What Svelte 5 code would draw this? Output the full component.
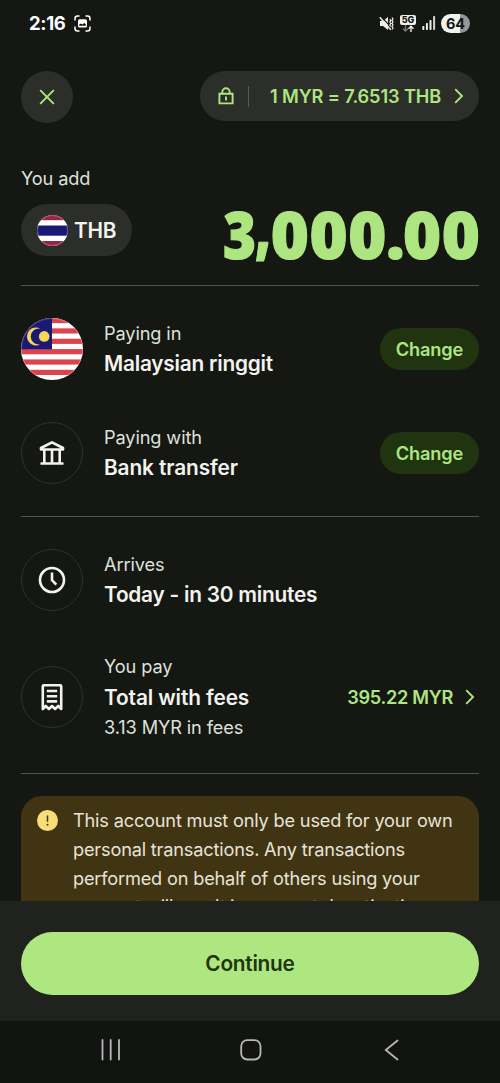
<script>
  const stripes = Array.from({ length: 6 }, (_, i) => i);
  const bars = [4, 7, 10, 14];
</script>

{#snippet chevron()}
  <svg class="chevron" width="10" height="16" viewBox="0 0 10 16"><path d="M1.2 1.2 8 8l-6.8 6.8" /></svg>
{/snippet}

<div class="screen">
  <div class="status">
    <div class="left">
      <span class="time">2:16</span>
      <svg width="17" height="17" viewBox="0 0 17 17">
        <path d="M1 5V3.5Q1 1 3.5 1H5M12 1h1.5Q16 1 16 3.5V5M16 12v1.5q0 2.5-2.5 2.5H12M5 16H3.5Q1 16 1 13.5V12" fill="none" stroke="#fff" stroke-width="1.5" stroke-linecap="round" />
        <rect x="4" y="4.3" width="9" height="8.2" rx="1.6" fill="#fff" />
        <path d="M5.2 10.8V9.600l1.800-1 1.500 1 1.800-1.700 1.500 1.400v1.500z" fill="#151712" />
      </svg>
    </div>
    <div class="right">
      <svg width="15" height="15" viewBox="0 0 15 15">
        <path d="M1 5h3l5-4v13L4 10H1z" fill="#eee" />
        <path d="M2 .3l12 13" stroke="#151712" stroke-width="1.200" />
        <path d="M.8 1.300l11 12.500" stroke="#eee" stroke-width="1.500" />
        <path d="M10.800 3l1 1.500-1 1.500 1 1.500-1 1.500 1 1.500M13 1.500l1 1.500-1 1.500 1 1.500-1 1.500 1 1.500-1 1.500 1 1.500-1 1.500" fill="none" stroke="#eee" stroke-width="1.200" />
      </svg>
      <div class="net">
        <span>5G</span>
        <svg width="12" height="7" viewBox="0 0 12 7" fill="none">
          <path d="M3.500 0v6M1 3.500 3.500 6 6 3.500" stroke="#777" stroke-width="1.300" />
          <path d="M9 7V1.500M6.500 3.800 9 1.300l2.500 2.500" stroke="#eee" stroke-width="1.400" />
        </svg>
      </div>
      <svg class="signal" width="14" height="14" viewBox="0 0 14 14">
        {#each bars as h, i}
          <rect x={i * 3.6 + 0.3} y={14 - h} width="2" height={h} rx="0.7" fill={i === 3 ? '#d4d4d4' : '#eee'} />
        {/each}
      </svg>
      <span class="battery">64</span>
    </div>
  </div>

  <header>
    <button class="close" aria-label="Close">
      <svg width="16" height="16" viewBox="0 0 16 16"><path d="M1.200 1.200l13.600 13.600M14.800 1.200 1.200 14.800" /></svg>
    </button>
    <button class="rate">
      <svg width="16" height="18" viewBox="0 0 16 18">
        <path d="M1.400 6.800h13.200v9.600H1.400zM4.300 6.500V5a3.700 3.700 0 0 1 7.400 0v1.500M8 9.600v3.800" />
      </svg>
      <i></i>
      <span>1 MYR = 7.6513 THB</span>
      {@render chevron()}
    </button>
  </header>

  <main>
    <div class="label add">You add</div>
    <div class="amount-row">
      <button class="currency">
        <svg width="31" height="31" viewBox="0 0 31 31">
          <clipPath id="th"><circle cx="15.500" cy="15.500" r="15.500" /></clipPath>
          <g clip-path="url(#th)">
            <rect width="31" height="31" fill="#fff" />
            <rect width="31" height="5.200" fill="#982447" />
            <rect y="10.500" width="31" height="10.200" fill="#1b1976" />
            <rect y="26" width="31" height="5" fill="#982447" />
          </g>
          <circle cx="15.500" cy="15.500" r="15" fill="none" stroke="#fff" stroke-opacity=".2" />
        </svg>
        <span>THB</span>
      </button>
      <div class="amount"><span class="lead">3</span><span class="comma">,</span>000<span class="point">.</span>00</div>
    </div>
    <hr />

    <section class="row first">
      <svg class="flag" viewBox="0 0 62 62">
        <clipPath id="my"><circle cx="31" cy="31" r="31" /></clipPath>
        <g clip-path="url(#my)">
          <rect width="62" height="62" fill="#fff" />
          {#each stripes as i}
            <rect y={i * 10.36} width="62" height="5.180" fill="#dd434b" />
          {/each}
          <rect width="31" height="31.300" fill="#1b1976" />
          <path d="M19.500 10.600A9 9 0 1 0 19.500 26.200 8 8 0 1 1 19.500 10.600Z" fill="#f6d751" />
          <circle cx="23.200" cy="18.400" r="5.300" fill="#f6d751" />
        </g>
        <circle cx="31" cy="31" r="30.500" fill="none" stroke="#fff" stroke-opacity=".2" />
      </svg>
      <div class="copy"><div class="label">Paying in</div><div class="title">Malaysian ringgit</div></div>
      <button class="change">Change</button>
    </section>

    <section class="row second">
      <div class="ring">
        <svg width="26" height="26" viewBox="0 0 26 26">
          <path d="M2 9.500V8L13 2.300 24 8v1.500zM5.300 10v13M13 10v13M20.700 10v13M1.500 23.500h23" />
        </svg>
      </div>
      <div class="copy"><div class="label">Paying with</div><div class="title">Bank transfer</div></div>
      <button class="change">Change</button>
    </section>
    <hr />

    <section class="row third">
      <div class="ring">
        <svg width="28" height="28" viewBox="0 0 28 28"><circle cx="14" cy="14" r="12" /><path d="M14 6.500v7.700l4.300 4.500" /></svg>
      </div>
      <div class="copy"><div class="label">Arrives</div><div class="title">Today - in 30 minutes</div></div>
    </section>

    <section class="row fourth">
      <div class="ring">
        <svg width="24" height="28" viewBox="0 0 24 28">
          <path d="M2.800 26V3.200q0-1 1-1h16.400q1 0 1 1V26l-3-3-3.100 3-3.100-3-3.100 3-3.100-3zM6.800 8h10.400M6.800 13.200h10.400M6.800 18.400h10.400" />
        </svg>
      </div>
      <div class="copy">
        <div class="label">You pay</div><div class="title">Total with fees</div><div class="label">3.13 MYR in fees</div>
      </div>
      <button class="total"><span>395.22 MYR</span>{@render chevron()}</button>
    </section>
    <hr />

    <div class="alert">
      <svg width="21" height="21" viewBox="0 0 21 21">
        <circle cx="10.500" cy="10.500" r="10.500" fill="#f7de78" />
        <path d="M10.500 5.500v6.300" stroke="#423512" stroke-width="1.500" />
        <circle cx="10.500" cy="14.800" r="1" fill="#423512" />
      </svg>
      <p>This account must only be used for your own<br />personal transactions. Any transactions<br />performed on behalf of others using your<br />account will result in account deactivation</p>
    </div>
  </main>

  <footer><button>Continue</button></footer>

  <nav>
    <svg width="20" height="22" viewBox="0 0 20 22"><path d="M1.500 1v19.500M9.700 1v19.500M18 1v19.500" /></svg>
    <svg class="home" width="22" height="22" viewBox="0 0 22 22"><rect x="1.200" y="1.200" width="19.300" height="19.300" rx="6" /></svg>
    <svg width="15" height="22" viewBox="0 0 15 22"><path d="M13.500 1.500 1.800 11l11.700 9.500" /></svg>
  </nav>
</div>

<style>
  :global(body) { margin: 0; background: #151712; }
  .screen {
    width: 500px; height: 1083px; overflow: hidden; display: flex; flex-direction: column;
    background: #151712; color: #f2f3ee; font-family: Inter, sans-serif; box-sizing: border-box;
  }
  .screen * { box-sizing: border-box; }
  svg { display: block; flex: none; }
  button { font: inherit; color: inherit; border: 0; padding: 0; background: none; display: flex; align-items: center; }
  .status { height: 46px; flex: none; padding: 0 30px 0 29px; display: flex; justify-content: space-between; align-items: center; }
  .left { display: flex; align-items: center; gap: 8.500px; }
  .time { font-size: 18.500px; font-weight: 700; color: #fff; letter-spacing: -.35px; }
  .right { display: flex; align-items: center; }
  .net { width: 16px; margin-left: 6px; padding-top: 1px; display: flex; flex-direction: column; align-items: center; }
  .net span { background: #eee; color: #151712; border-radius: 2px; width: 16px; height: 10px; font-size: 9px; line-height: 10px; font-weight: 800; text-align: center; }
  .signal { margin-left: 6px; }
  .battery {
    margin-left: 5px; width: 29px; height: 19px; border-radius: 10px; color: #151712;
    background: linear-gradient(90deg, #f1f1f1 64%, #969696 64%);
    font-size: 14.500px; line-height: 19px; font-weight: 700; text-align: center;
  }
  header { height: 102px; flex: none; padding: 25px 21px 0; display: flex; justify-content: space-between; align-items: flex-start; }
  .close { width: 52px; height: 52px; border-radius: 50%; background: #2c2e29; justify-content: center; }
  .close path, .rate path, .chevron path { fill: none; stroke: #ade681; stroke-width: 1.900; }
  .rate { width: 279px; height: 50px; border-radius: 25px; background: #2c2e29; padding: 0 15px 0 18px; color: #ade681; font-size: 18.200px; font-weight: 600; letter-spacing: -.12px; }
  .rate i { width: 1px; height: 21px; background: #595b55; margin: 0 21px 0 14px; }
  .rate span { flex: 1; white-space: nowrap; text-align: left; }
  main { flex: 1; min-height: 0; overflow: hidden; padding: 0 21px; }
  .label { font-size: 18.200px; line-height: 30px; color: #dfe0db; white-space: nowrap; letter-spacing: -.12px; }
  .add { padding-top: 15px; }
  .amount-row { height: 92px; display: flex; justify-content: space-between; align-items: flex-start; padding-top: 11px; }
  .currency { width: 111px; height: 52px; border-radius: 26px; background: #2c2e29; padding-left: 16px; gap: 6px; font-size: 20.800px; font-weight: 600; letter-spacing: -.3px; }
  .amount { font: 900 65px/61px 'Noto Sans', sans-serif; letter-spacing: .7px; margin-right: -1.500px; color: #ade681; -webkit-text-stroke: 1.200px #ade681; display: flex; }
  .lead { transform: scaleX(.87); transform-origin: right; margin-right: -2px; }
  .comma { width: 16px; transform: translateY(-7px) scaleX(.8); transform-origin: left; }
  .point { margin: 0 -2.500px 0 -1.200px; }
  hr { margin: 0; border: 0; height: 1px; background: #52544f; }
  .row { display: flex; align-items: center; gap: 21px; height: 62px; }
  .first { margin-top: 32px; }
  .second { margin: 42px 0 32px; }
  .row .label:first-child { line-height: 29px; padding-bottom: 1px; }
  .third { margin-top: 32px; }
  .fourth { height: 90px; margin: 41px 0 31px; }
  .fourth .title { line-height: 31px; }
  .fourth .title + .label { margin-top: -1px; }
  .flag, .ring { width: 62px; height: 62px; flex: none; }
  .ring { border: 1px solid #30322d; border-radius: 50%; display: flex; align-items: center; justify-content: center; }
  .ring path, .ring circle { fill: none; stroke: #f2f3ee; stroke-width: 2.600; stroke-linejoin: round; }
  .copy { flex: 1; }
  .title { font-size: 20.800px; line-height: 30px; font-weight: 600; white-space: nowrap; letter-spacing: -.22px; }
  .second .title, .fourth .title { letter-spacing: -.1px; }
  .change { width: 99px; height: 42px; border-radius: 21px; background: #203410; color: #ade681; font-size: 18.200px; font-weight: 600; letter-spacing: -.15px; justify-content: center; }
  .total { color: #ade681; font-size: 18.200px; font-weight: 600; letter-spacing: -.3px; gap: 12px; padding-right: 4px; }
  .alert { margin-top: 22px; height: 240px; border-radius: 21px; background: #413412; padding: 10px 15px 10px 15.500px; display: flex; gap: 15.500px; }
  .alert svg { margin-top: 4px; }
  .alert p { margin: 0; font-size: 18.200px; line-height: 28.800px; color: #e6e3d9; white-space: nowrap; letter-spacing: -.19px; }
  footer { flex: none; height: 120px; background: #20221e; padding: 31px 21px 0; }
  footer button { width: 100%; height: 63px; border-radius: 32px; background: #aee780; color: #203410; font-size: 20.800px; font-weight: 600; letter-spacing: -.25px; justify-content: center; }
  nav { flex: none; height: 62px; padding: 0 101px 4px; display: flex; justify-content: space-between; align-items: center; background: #121411; }
  .home { margin-right: 3px; }
  nav path, nav rect { fill: none; stroke: #b8b8b8; stroke-width: 1.800; stroke-linecap: round; }
</style>
